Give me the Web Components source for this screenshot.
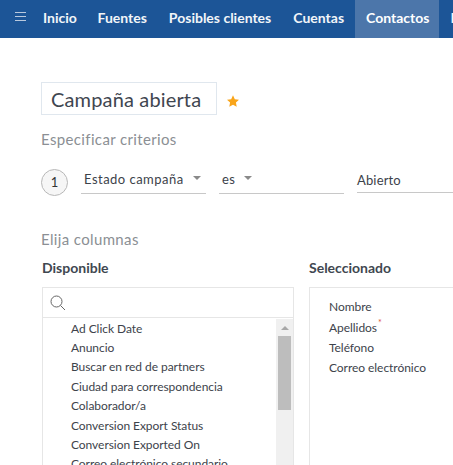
<!DOCTYPE html>
<html lang="es"><head><meta charset="utf-8"><title>Campaña abierta</title>
<style>
html,body{margin:0;height:465px;overflow:hidden;background:#fff;font-family:Lato,"Open Sans",sans-serif}
</style></head><body>
<app-nav></app-nav>
<main-page></main-page>
<script>
function def(name,html,setup){customElements.define(name,class extends HTMLElement{constructor(){super();this.attachShadow({mode:'open'}).innerHTML=html;}connectedCallback(){setup&&setup(this)}})}
def('app-nav',`<style>
:host{display:flex;height:38px;width:453px;background:#1c5597;color:#f2f5f9;font:700 14px/36px Lato,sans-serif;overflow:hidden;white-space:nowrap}
svg{flex:none;margin:12px 6px 0 15px;width:11px;height:9px}
span{padding:0 11px;flex:none}
.f{padding-right:9.600px}
.a{background:#4c76aa;color:#fff;padding:0 10px 0 11px}
</style>
<svg viewBox="0 0 11 9"><path d="M0 .5h11M0 4.500h11M0 8.500h11" stroke="#b9c9de" stroke-width="1"/></svg>
<span class="f">Inicio</span><span>Fuentes</span><span>Posibles clientes</span><span>Cuentas</span><span class="a">Contactos</span><span>Informes</span>`);
def('title-field',`<style>
:host{display:flex;align-items:center;gap:10px;height:33px}
div{box-sizing:border-box;width:176px;height:33px;border:1px solid #e0e7ee;padding:0 9px;font:20px/32px Lato,sans-serif;color:#3f4650;letter-spacing:.15px}
svg{width:12px;height:12px;margin-top:5px}
</style><div><slot></slot></div><svg viewBox=".7 1 22.600 21.600"><path d="M12 1l3.400 7.300 7.900 1-5.800 5.400 1.500 7.900-7-3.900-7 3.900 1.500-7.900L.7 9.300l7.900-1z" fill="#f9a51a"/></svg>`);
def('sec-title',`<style>:host{display:block;font:15px/20px Lato,sans-serif;color:#8b8f94;letter-spacing:.36px}</style><slot></slot>`);
def('drop-field',`<style>
:host{display:flex;box-sizing:border-box;width:125px;height:25px;border-bottom:1px solid #c8c8c8;padding:0 3px;font:13px/20px Lato,"Liberation Sans",sans-serif;color:#3c424a;letter-spacing:.48px;gap:9px}
i{width:0;height:0;border:4px solid transparent;border-top:4px solid #8a8a8a;border-bottom:0;margin-top:7px}
</style><span><slot></slot></span><i></i>`);
def('criteria-row',`<style>
:host{display:flex;align-items:flex-start;height:27px;font:13px/20px Lato,sans-serif}
b{box-sizing:border-box;flex:none;width:27px;height:27px;border:1px solid #b8b8b8;border-radius:50%;background:#f6f6f6;font:400 13px/25px Lato,sans-serif;text-align:center;color:#333;margin-right:13px}
.f{display:flex;gap:13px;flex:none}
.v{box-sizing:border-box;width:96px;height:24px;border-bottom:1px solid #c8c8c8;padding:1px 0 0;color:#3c424a;letter-spacing:.15px}
</style><b>1</b><div class="f"><slot></slot><div class="v">Abierto</div></div>`);
def('list-item',`<style>:host{display:block;height:19.400px;font:12px/19.400px Lato,sans-serif;color:#3d434b;white-space:nowrap;letter-spacing:-.05px}</style><slot></slot>`);
def('avail-box',`<style>
:host{display:block;width:252px;flex:none}
h3{margin:0;font:700 14px/20px Lato,sans-serif;color:#404750;height:29px}
.b{box-sizing:border-box;border:1px solid #e6e6e6;border-bottom:0;height:190px;overflow:hidden}
.s{height:29px;border-bottom:1px solid #e6e6e6;display:flex;align-items:center;padding-left:7px}
svg.q{width:16px;height:16px}
.l{display:flex;height:160px;margin-top:1px}
.i{flex:1;padding:0 0 0 28px;margin-top:-.4px}
.t{box-sizing:border-box;width:17px;background:#f0f0f0;padding:7px 2px 0;display:flex;flex-direction:column;align-items:center}
.t i{width:0;height:0;border:4.500px solid transparent;border-bottom:4px solid #a8a8a8;border-top:0}
.t u{display:block;width:13px;height:74px;background:#bdbdbd;margin-top:6px}
</style><h3><slot name="h"></slot></h3><div class="b"><div class="s"><svg class="q" viewBox="0 0 16 16" fill="none" stroke="#666" stroke-width="1"><circle cx="6.500" cy="6.500" r="5.500"/><path d="M10.500 10.500L15 15"/></svg></div><div class="l"><div class="i"><slot></slot></div><div class="t"><i></i><u></u></div></div></div>`);
def('sel-box',`<style>
:host{display:block;flex:none;width:160px}
h3{margin:0;font:700 14px/20px Lato,sans-serif;color:#404750;height:29px}
.b{box-sizing:border-box;border:1px solid #e6e6e6;border-right:0;border-bottom:0;height:190px;padding:9.400px 0 0 19px}
</style><h3><slot name="h"></slot></h3><div class="b"><slot></slot></div>`);
def('sel-item',`<style>:host{display:block;height:20.300px;font:12px/20.300px Lato,sans-serif;color:#3d434b;white-space:nowrap;letter-spacing:-.05px}
sup{color:#e0553a;font-size:9px;line-height:0;position:relative;top:-1px;margin-left:1px}</style><slot></slot><sup></sup>`,el=>{if(el.hasAttribute('req'))el.shadowRoot.querySelector('sup').textContent='*'});
def('main-page',`<style>
:host{display:block;padding:44px 0 0 41px;width:412px;overflow:hidden}
title-field{margin-bottom:14px}
sec-title.a{margin-bottom:20px}
criteria-row{margin-bottom:33px}
sec-title.b{margin-bottom:9px}
.cols{display:flex;gap:15px;margin-left:1px}
</style>
<title-field>Campaña abierta</title-field>
<sec-title class="a">Especificar criterios</sec-title>
<criteria-row><drop-field>Estado campaña</drop-field><drop-field>es</drop-field></criteria-row>
<sec-title class="b">Elija columnas</sec-title>
<div class="cols">
<avail-box><span slot="h">Disponible</span>
<list-item>Ad Click Date</list-item><list-item>Anuncio</list-item><list-item>Buscar en red de partners</list-item><list-item>Ciudad para correspondencia</list-item><list-item>Colaborador/a</list-item><list-item>Conversion Export Status</list-item><list-item>Conversion Exported On</list-item><list-item>Correo electrónico secundario</list-item>
</avail-box>
<sel-box><span slot="h">Seleccionado</span>
<sel-item>Nombre</sel-item><sel-item req>Apellidos</sel-item><sel-item>Teléfono</sel-item><sel-item>Correo electrónico</sel-item>
</sel-box>
</div>`);
</script>
</body></html>
